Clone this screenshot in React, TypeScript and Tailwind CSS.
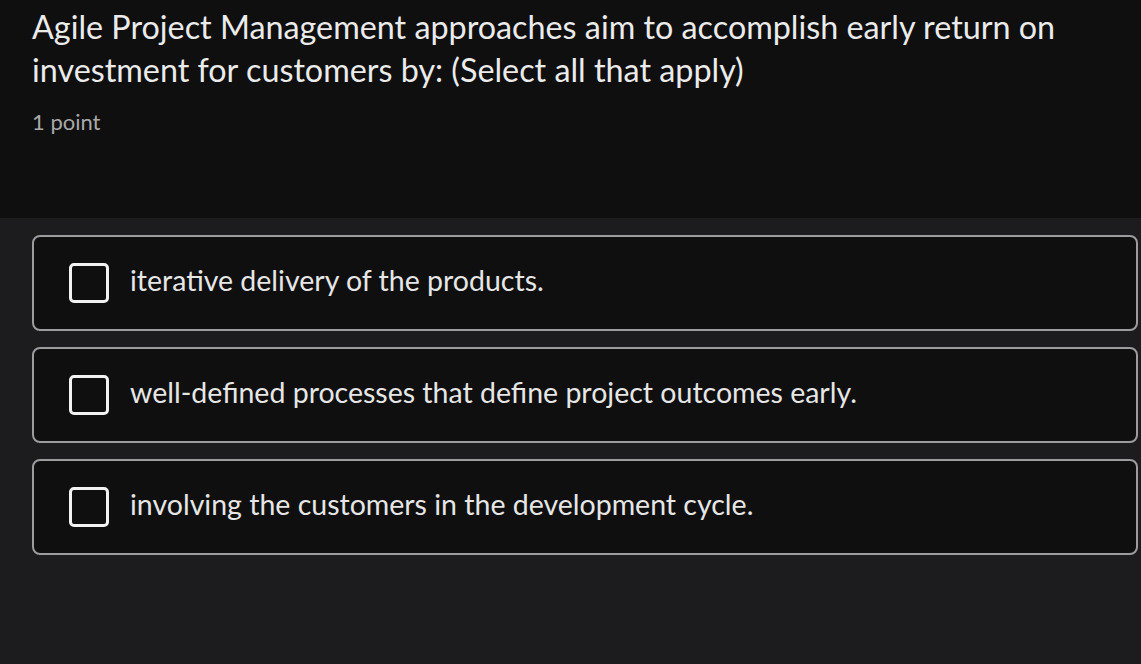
import { ReactNode } from "react";

const options = [
  "iterative delivery of the products.",
  "well-defined processes that define project outcomes early.",
  "involving the customers in the development cycle.",
];

function Option({ children }: { children: ReactNode }) {
  return (
    <label className="flex items-center h-[96px] rounded-[8px] border-2 border-[#9b9ba0] bg-[#0f0f0f] pl-[35px] pr-4">
      <span className="w-[40px] h-[40px] shrink-0 rounded-[5px] border-[3px] border-[#f2f2f2]" />
      <span className="ml-[21px] text-[28.5px] text-[#e6e6e6] leading-none pb-[6px]">{children}</span>
    </label>
  );
}

export default function App() {
  return (
    <div className="w-[1141px] h-[664px] overflow-hidden bg-[#1c1c1e] font-['Lato','Noto_Sans',sans-serif]">
      <div className="h-[218px] bg-[#0f0f0f] px-[32px] pt-[5px]">
        <h1 className="text-[32.3px] leading-[43px] text-[#ebebeb]">
          Agile Project Management approaches aim to accomplish early return on investment for customers by: (Select all that apply)
        </h1>
        <p className="mt-[14px] text-[22px] text-[#a9a9a9]">1 point</p>
      </div>
      <div className="flex flex-col gap-[16px] pl-[32px] pr-[3px] pt-[17px]">
        {options.map((o) => (
          <Option key={o}>{o}</Option>
        ))}
      </div>
    </div>
  );
}
